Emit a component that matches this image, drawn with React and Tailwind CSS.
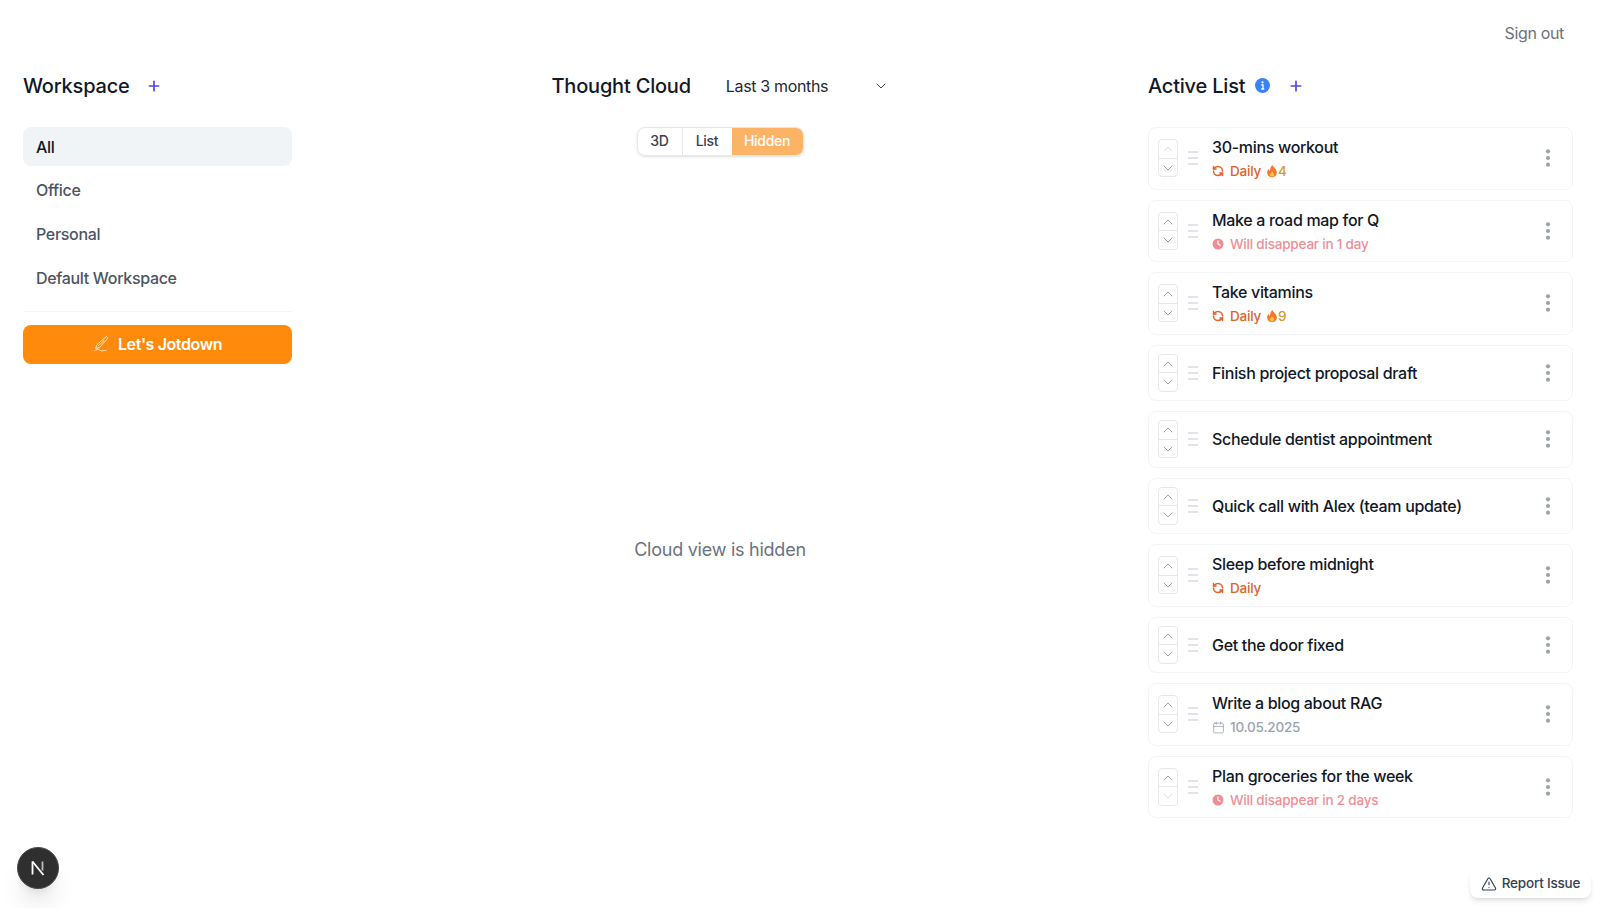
import React from "react";
import { Plus, ChevronDown, ChevronUp, TriangleAlert, RefreshCcw, Calendar } from "lucide-react";

const items = [
  { t: "30-mins workout", k: "daily", n: "4", first: true },
  { t: "Make a road map for Q", k: "gone", m: "Will disappear in 1 day" },
  { t: "Take vitamins", k: "daily", n: "9" },
  { t: "Finish project proposal draft" },
  { t: "Schedule dentist appointment" },
  { t: "Quick call with Alex (team update)" },
  { t: "Sleep before midnight", k: "daily" },
  { t: "Get the door fixed" },
  { t: "Write a blog about RAG", k: "date" },
  { t: "Plan groceries for the week", k: "gone", m: "Will disappear in 2 days", last: true },
];

function Flame() {
  return (
    <svg width="12" height="14" viewBox="0 0 13 14" className="shrink-0">
      <path d="M7 0.500c.4 2.300 4.800 4.200 4.800 8.200A5.300 5.300 0 0 1 6.500 13.800 5.300 5.300 0 0 1 1.200 8.700c0-1.800 1-3 1.800-3.800.2 1.100.7 1.800 1.400 2.100C4.200 4.500 5.300 2 7 .5z" fill="#f4782a" />
      <path d="M6.600 7.200c.5 1.200 2.200 1.900 2.200 3.800a2.300 2.300 0 0 1-4.600 0c0-1.700 1.800-2.400 2.400-3.800z" fill="#fbbf4a" />
    </svg>
  );
}

function ClockFill() {
  return (
    <svg width="12" height="12" viewBox="0 0 12 12" className="shrink-0">
      <circle cx="6" cy="6" r="5.500" fill="#ee8f95" />
      <path d="M6 2.800V6l2.200 1.300" stroke="#fff" strokeWidth="1.200" fill="none" strokeLinecap="round" />
    </svg>
  );
}

function Meta({ it }) {
  if (it.k === "daily")
    return (
      <div className="flex items-center h-5 text-[13.500px] tracking-[-0.2px] font-medium text-[#dd622b]">
        <RefreshCcw size={12} strokeWidth={3} className="text-[#e8602c] mr-[6px] shrink-0" />
        <span>Daily</span>
        {it.n && (
          <span className="flex items-center ml-[5px] text-[#cf9a35]">
            <Flame />
            {it.n}
          </span>
        )}
      </div>
    );
  if (it.k === "gone")
    return (
      <div className="flex items-center h-5 text-[13.500px] tracking-[-0.2px] font-medium text-[#ee8f95]">
        <span className="mr-[6px] flex"><ClockFill /></span>
        {it.m}
      </div>
    );
  if (it.k === "date")
    return (
      <div className="flex items-center h-5 text-[13.500px] tracking-[-0.2px] font-medium text-[#9ca3af]">
        <Calendar size={13} strokeWidth={1.500} className="mr-[5px] shrink-0" />
        10.05.2025
      </div>
    );
  return null;
}

function Card({ it }) {
  const hasMeta = !!it.k;
  return (
    <div className={`flex items-center rounded-lg border border-[#f3f4f6] pl-[9px] pr-[13px] ${hasMeta ? "h-[62.500px]" : "h-[56.500px]"}`}>
      <div className="flex flex-col w-[20px] h-[38px] rounded border border-[#e5e7eb] shrink-0">
        <div className={`flex-1 flex items-center justify-center border-b border-[#e5e7eb] ${it.first ? "text-[#dcdfe4]" : "text-[#9ca3af]"}`}>
          <ChevronUp size={16} strokeWidth={1.500} />
        </div>
        <div className={`flex-1 flex items-center justify-center ${it.last ? "text-[#dcdfe4]" : "text-[#9ca3af]"}`}>
          <ChevronDown size={16} strokeWidth={1.500} />
        </div>
      </div>
      <svg width="12" height="14" viewBox="0 0 12 14" className="ml-[9px] mr-[13px] shrink-0">
        <path d="M1 1h10M1 7h10M1 13h10" stroke="#e2e4e9" strokeWidth="2" />
      </svg>
      <div className="flex-1 min-w-0">
        <div className="text-[16px] tracking-[-0.32px] leading-6 font-medium text-[#111827]">{it.t}</div>
        {hasMeta && <div className="mt-[2px]"><Meta it={it} /></div>}
      </div>
      <svg width="6" height="20" viewBox="0 0 6 20" className="shrink-0 mr-[8px]">
        <circle cx="3" cy="3.300" r="2.100" fill="#9ca3af" />
        <circle cx="3" cy="10" r="2.100" fill="#9ca3af" />
        <circle cx="3" cy="16.700" r="2.100" fill="#9ca3af" />
      </svg>
    </div>
  );
}

export default function App() {
  return (
    <div className="relative h-[908px] w-[1600px] overflow-hidden bg-white font-['Inter',sans-serif]">
      <div className="flex justify-end pt-[21px] pr-[36px] h-[65px]">
        <span className="text-[16px] tracking-[-0.35px] leading-6 text-[#6b7280]">Sign out</span>
      </div>
      <div className="flex items-start pl-[23px] pr-[27px]">
        <aside className="w-[269px] shrink-0">
          <div className="flex items-center h-[41px]">
            <h2 className="text-[20px] tracking-[-0.2px] font-medium text-[#111827]">Workspace</h2>
            <Plus size={16} strokeWidth={2.500} className="ml-[16px] text-[#4f46e5]" />
          </div>
          <div className="mt-[21px] flex flex-col gap-[4.700px] border-b border-[#f3f4f6] pb-[13.900px] text-[16px] tracking-[-0.32px] font-medium">
            <div className="h-[39px] flex items-center px-[13px] rounded-lg bg-[#f1f4f6] text-[#111827]">All</div>
            <div className="h-[39px] flex items-center px-[13px] text-[#4b5563]">Office</div>
            <div className="h-[39px] flex items-center px-[13px] text-[#4b5563]">Personal</div>
            <div className="h-[39px] flex items-center px-[13px] text-[#4b5563]">Default Workspace</div>
          </div>
          <button className="mt-[13px] w-full h-[39px] rounded-lg bg-[#ff8a0c] flex items-center justify-center text-[16px] tracking-[-0.4px] font-semibold text-white">
            <svg width="18" height="18" viewBox="0 0 18 18" fill="none" stroke="#ffe3c4" strokeWidth="1" strokeLinecap="round" strokeLinejoin="round" className="mr-[7px]">
              <path d="M13.500 1.500 4 9.500 2.500 13.500 6.500 12.500 14.500 3.500a1.300 1.300 0 0 0-1-2z" />
              <path d="M11 5.500 5 11" />
              <path d="M1.500 16c2-1.500 3.500-2 4.500-1.500s1.500 1.500 3 1.300 3-.5 4-.3" />
            </svg>
            Let's Jotdown
          </button>
        </aside>
        <main className="flex-1 flex flex-col items-center">
          <div className="flex items-center h-[41px] w-[337px]">
            <h2 className="text-[20px] tracking-[-0.2px] font-medium text-[#111827] whitespace-nowrap">Thought Cloud</h2>
            <span className="ml-[35px] text-[16px] tracking-[-0.35px] text-[#1f2937]">Last 3 months</span>
            <ChevronDown size={16} strokeWidth={1.500} className="ml-auto text-[#374151]" />
          </div>
          <div className="mt-[21px] flex h-[29px] rounded-lg shadow-sm border border-[#e5e7eb] overflow-hidden text-[14px] tracking-[-0.3px] font-medium">
            <div className="w-[45px] pb-[2px] flex items-center justify-center text-[#374151] border-r border-[#e5e7eb]">3D</div>
            <div className="w-[49px] pb-[2px] flex items-center justify-center text-[#374151]">List</div>
            <div className="w-[71px] pb-[2px] flex items-center justify-center text-white bg-[#fdb366]">Hidden</div>
          </div>
          <div className="mt-[380px] text-[18px] tracking-[-0.25px] leading-7 text-[#6b7280]">Cloud view is hidden</div>
        </main>
        <section className="w-[425px] shrink-0">
          <div className="flex items-center h-[41px]">
            <h2 className="text-[20px] tracking-[-0.2px] font-medium text-[#111827]">Active List</h2>
            <svg width="15" height="15" viewBox="0 0 15 15" className="ml-[10px]">
              <circle cx="7.500" cy="7.500" r="7.500" fill="#3b82f6" />
              <circle cx="7.500" cy="4.300" r="1.100" fill="#fff" />
              <path d="M6.200 6.800h1.800v4M6.200 11h3" stroke="#fff" strokeWidth="1.300" fill="none" />
            </svg>
            <Plus size={16} strokeWidth={2.500} className="ml-[18px] text-[#4f46e5]" />
          </div>
          <div className="mt-[21px] flex flex-col gap-[10px]">
            {items.map((it) => (
              <Card key={it.t} it={it} />
            ))}
          </div>
        </section>
      </div>
      <div className="absolute left-[17px] top-[847px] w-[42px] h-[42px] rounded-full bg-[#2f2f2f] border border-[#4a4a4a] shadow-xl flex items-center justify-center">
        <svg width="16" height="16" viewBox="0 0 16 16">
          <path d="M2.500 1.500v13" stroke="#fff" strokeWidth="1.800" />
          <path d="M2.500 1.500 13.500 15" stroke="#fff" strokeWidth="1.800" />
          <path d="M12.500 1.500v9" stroke="#bdbdbd" strokeWidth="1.800" />
        </svg>
      </div>
      <div className="absolute right-[9px] bottom-[10px] h-[27px] w-[121px] pb-[2px] rounded-lg bg-white shadow-md flex items-center justify-center text-[13.500px] tracking-[-0.2px] font-medium text-[#374151]">
        <TriangleAlert size={16} strokeWidth={1.750} className="mr-[5px]" />
        Report Issue
      </div>
    </div>
  );
}
